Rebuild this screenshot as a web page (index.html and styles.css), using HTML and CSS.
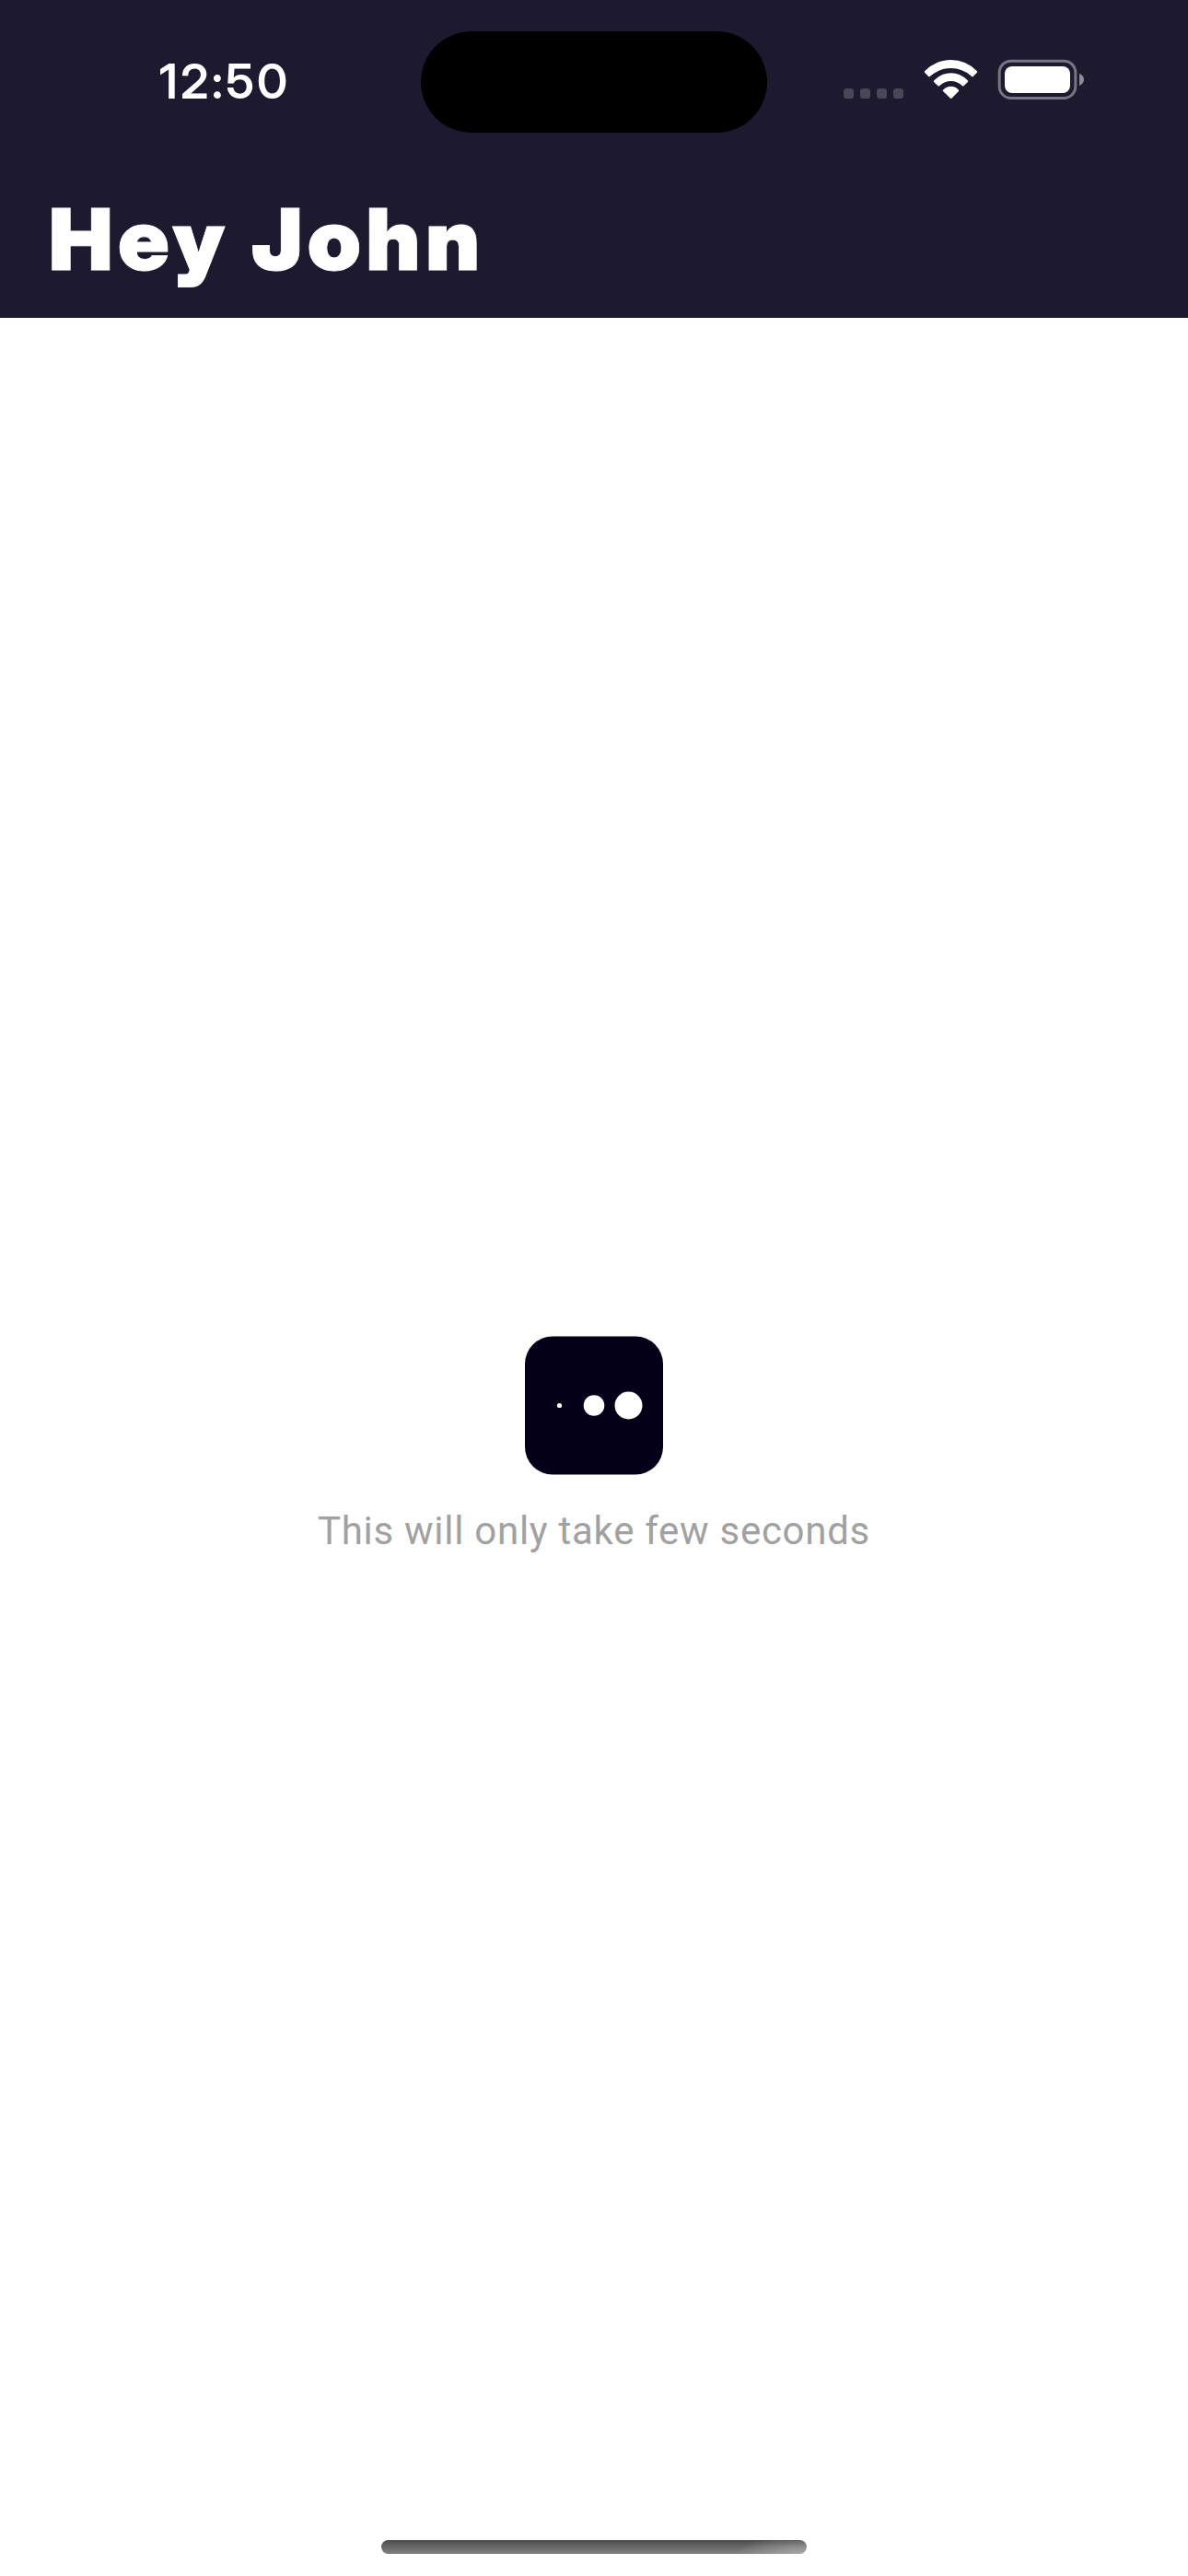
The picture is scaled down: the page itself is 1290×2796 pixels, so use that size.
FILE: index.html
```html
<!DOCTYPE html>
<html lang="en">
<head>
<meta charset="utf-8">
<title>Hey John</title>
<link rel="stylesheet" href="styles.css">
</head>
<body>
<header class="header">
  <div class="status">
    <div class="time">12:50</div>
    <div class="island"></div>
    <svg class="indicators" viewBox="0 0 900 240" aria-hidden="true">
      <g fill="#4a4658">
        <rect x="48" y="138" width="33" height="33" rx="10"/>
        <rect x="102" y="138" width="33" height="33" rx="10"/>
        <rect x="156" y="138" width="33" height="33" rx="10"/>
        <rect x="210" y="138" width="33" height="33" rx="10"/>
      </g>
      <g fill="#fff">
        <path d="M313 81Q350 45 398 45T482 81Q485 84 482 87L471 98Q468 101 465 98Q435 72 398 72T330 98Q327 101 324 98L313 87Q310 84 313 81Z"/>
        <path d="M343 112Q367 88 398 88T452 112Q455 115 452 118L440 129Q437 132 434 129Q418 114 398 114T361 129Q358 132 355 129L343 118Q340 115 343 112Z"/>
        <path d="M372 143Q383 131 398 131T423 143Q425 145 423 147L400 170Q398 172 396 170L372 147Q370 145 372 143Z"/>
        <rect x="573" y="66" width="213" height="87" rx="24"/>
      </g>
      <rect x="555.500" y="48.500" width="248" height="121" rx="38" fill="none" stroke="#777483" stroke-width="9"/>
      <path d="M816 89Q831 95 831 109T816 129Z" fill="#8e8b98"/>
    </svg>
  </div>
  <h1 class="title">Hey John</h1>
</header>
<main class="content">
  <svg class="loader" viewBox="0 0 150 151" aria-hidden="true">
    <rect y="0.500" width="150" height="150" rx="30" fill="#030017"/>
    <g fill="#fff">
      <circle cx="37.500" cy="75.500" r="2.600"/>
      <circle cx="75" cy="75.500" r="11.300"/>
      <circle cx="112.500" cy="75.500" r="15"/>
    </g>
  </svg>
  <p class="caption">This will only take few seconds</p>
</main>
<footer class="footer"><div class="home"></div></footer>
</body>
</html>
```
FILE: styles.css
```css
* { box-sizing: border-box; }
body {
  margin: 0;
  height: 2796px;
  display: flex;
  flex-direction: column;
  background: #fff;
  overflow: hidden;
}
.header {
  height: 345px;
  flex: none;
  background: #1d192f;
  color: #fff;
  font-family: "Inter Display", Inter, sans-serif;
}
.status {
  height: 177px;
  display: grid;
  grid-template-columns: 457px 376px 67px 300px;
  align-items: start;
}
.time {
  padding: 57px 0 0 173px;
  font-size: 52px;
  line-height: 64px;
  font-weight: 600;
  letter-spacing: 3.2px;
}
.island {
  height: 110px;
  margin-top: 34px;
  border-radius: 55px;
  background: #000;
}
.indicators {
  grid-column: 4;
  width: 300px;
  height: 80px;
  margin-top: 50px;
}
.title {
  margin: 0;
  padding: 23px 0 0 51px;
  font-size: 92px;
  line-height: 120px;
  font-weight: 900;
  letter-spacing: 5.2px;
  white-space: nowrap;
  -webkit-text-stroke: .8px #fff;
  transform: scaleX(1.04);
  transform-origin: 0 0;
}
.content {
  flex: 1;
  display: flex;
  flex-direction: column;
  align-items: center;
  padding-top: 1105px;
}
.loader {
  flex: none;
  width: 150px;
  height: 151px;
}
.caption {
  margin: 36px 0 0;
  font: 400 42px/50px Roboto, sans-serif;
  letter-spacing: .72px;
  color: #a1a1a1;
}
.footer {
  height: 39px;
  display: flex;
  justify-content: center;
}
.home {
  width: 462px;
  height: 15px;
  border-radius: 7.5px;
  background:
    radial-gradient(ellipse 80px 20px at 100% 100%, rgba(180, 180, 180, .8), transparent),
    linear-gradient(#4c4c4c, #808080);
}
```
